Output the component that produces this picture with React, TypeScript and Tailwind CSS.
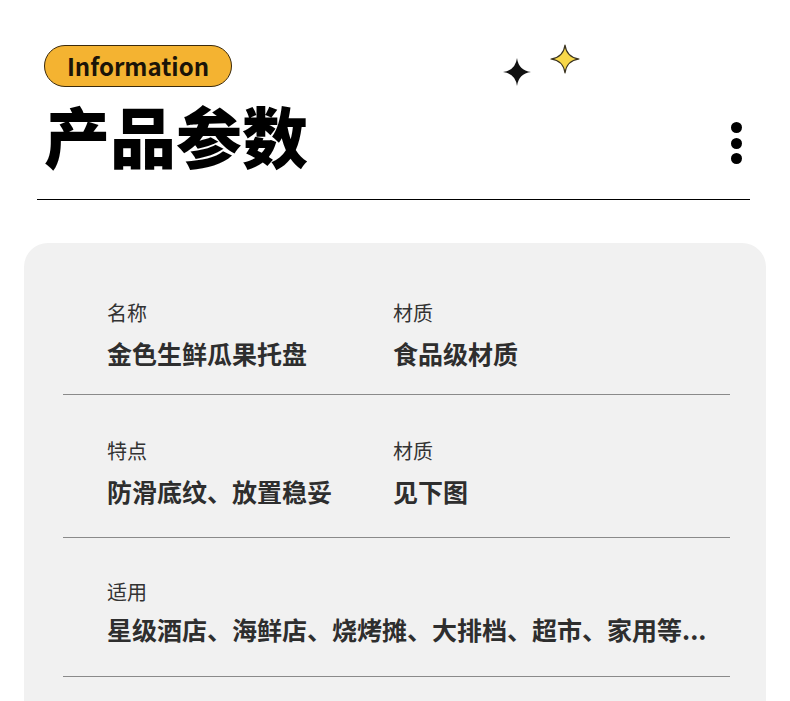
import React from 'react';

const cjk = '"Noto Sans CJK SC", "Noto Sans", sans-serif';

// four-point star with pinched sides
function Sparkle({ fill, stroke, className }: { fill: string; stroke?: string; className?: string }) {
  return (
    <svg viewBox="0 0 30 30" className={className}>
      <path
        d="M15 1 Q16.6 13.4 29 15 Q16.6 16.6 15 29 Q13.4 16.6 1 15 Q13.4 13.4 15 1Z"
        fill={fill}
        stroke={stroke ?? 'none'}
        strokeWidth={stroke ? 1.2 : 0}
        strokeLinejoin="round"
      />
    </svg>
  );
}

type Cell = { label: string; value: string };

const rows: { cells: Cell[]; pad: string; gap: string }[] = [
  {
    cells: [
      { label: '名称', value: '金色生鲜瓜果托盘' },
      { label: '材质', value: '食品级材质' },
    ],
    pad: 'pt-[55px] pb-[23px]',
    gap: 'mt-[7px]',
  },
  {
    cells: [
      { label: '特点', value: '防滑底纹、放置稳妥' },
      { label: '材质', value: '见下图' },
    ],
    pad: 'pt-[41px] pb-[28px]',
    gap: 'mt-[7px]',
  },
  {
    cells: [{ label: '适用', value: '星级酒店、海鲜店、烧烤摊、大排档、超市、家用等...' }],
    pad: 'pt-[39px] pb-[29px]',
    gap: 'mt-[4px]',
  },
];

export default function App() {
  return (
    <div className="w-[790px] h-[701px] overflow-hidden bg-white" style={{ fontFamily: cjk }}>
      {/* header */}
      <div className="relative pl-[44px] pr-[48px] pt-[45px]">
        <div className="flex h-[42px] w-[188px] items-center justify-center rounded-full border border-[#3b2a0c] bg-[#f4b331]">
          <span className="text-[24px] font-bold leading-none text-[#1b1408]">Information</span>
        </div>
        <div className="mt-[14px] flex items-start justify-between">
          <h1 className="text-[66px] font-black leading-none text-black">产品参数</h1>
          <div className="mt-[21px] flex flex-col gap-[4.5px]">
            <span className="block h-[11px] w-[11px] rounded-full bg-black" />
            <span className="block h-[11px] w-[11px] rounded-full bg-black" />
            <span className="block h-[11px] w-[11px] rounded-full bg-black" />
          </div>
        </div>
        <Sparkle fill="#111" className="absolute left-[502px] top-[57px] h-[30px] w-[30px]" />
        <Sparkle fill="#f8d84a" stroke="#3a3320" className="absolute left-[550px] top-[44px] h-[30px] w-[30px]" />
      </div>

      <div className="ml-[37px] mr-[40px] mt-[32px] h-px bg-black" />

      {/* parameters card */}
      <div className="mx-[24px] mt-[43px] h-[600px] rounded-[24px] bg-[#f1f1f1] pl-[39px] pr-[36px]">
        {rows.map((row, i) => (
          <div key={i} className={`border-b border-[#8a8a8a] pl-[44px] ${row.pad}`}>
            <div className="grid grid-cols-[286px_1fr]">
              {row.cells.map((c, j) => (
                <div key={j} className={row.cells.length === 1 ? 'col-span-2' : ''}>
                  <div className="text-[20px] leading-[30px] text-[#333]">{c.label}</div>
                  <div className={`${row.gap} whitespace-nowrap text-[25px] font-bold leading-[36px] text-[#2e2e2e]`}>
                    {c.value}
                  </div>
                </div>
              ))}
            </div>
          </div>
        ))}
      </div>
    </div>
  );
}
